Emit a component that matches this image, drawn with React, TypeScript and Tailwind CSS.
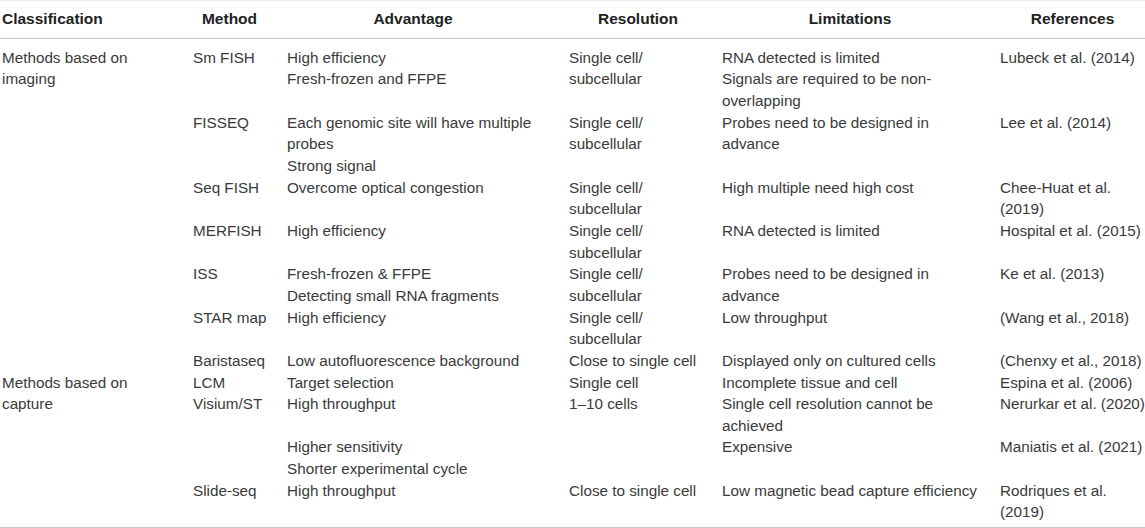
import React from "react";

type Row = {
  cls?: string[];
  span?: number;
  method: string[];
  adv: string[];
  res: string[];
  lim: string[];
  ref: string[];
};

const rows: Row[] = [
  {
    cls: ["Methods based on", "imaging"],
    span: 7,
    method: ["Sm FISH"],
    adv: ["High efficiency", "Fresh-frozen and FFPE"],
    res: ["Single cell/", "subcellular"],
    lim: ["RNA detected is limited", "Signals are required to be non-", "overlapping"],
    ref: ["Lubeck et al. (2014)"],
  },
  {
    method: ["FISSEQ"],
    adv: ["Each genomic site will have multiple", "probes", "Strong signal"],
    res: ["Single cell/", "subcellular"],
    lim: ["Probes need to be designed in", "advance"],
    ref: ["Lee et al. (2014)"],
  },
  {
    method: ["Seq FISH"],
    adv: ["Overcome optical congestion"],
    res: ["Single cell/", "subcellular"],
    lim: ["High multiple need high cost"],
    ref: ["Chee-Huat et al.", "(2019)"],
  },
  {
    method: ["MERFISH"],
    adv: ["High efficiency"],
    res: ["Single cell/", "subcellular"],
    lim: ["RNA detected is limited"],
    ref: ["Hospital et al. (2015)"],
  },
  {
    method: ["ISS"],
    adv: ["Fresh-frozen & FFPE", "Detecting small RNA fragments"],
    res: ["Single cell/", "subcellular"],
    lim: ["Probes need to be designed in", "advance"],
    ref: ["Ke et al. (2013)"],
  },
  {
    method: ["STAR map"],
    adv: ["High efficiency"],
    res: ["Single cell/", "subcellular"],
    lim: ["Low throughput"],
    ref: ["(Wang et al., 2018)"],
  },
  {
    method: ["Baristaseq"],
    adv: ["Low autofluorescence background"],
    res: ["Close to single cell"],
    lim: ["Displayed only on cultured cells"],
    ref: ["(Chenxy et al., 2018)"],
  },
  {
    cls: ["Methods based on", "capture"],
    span: 4,
    method: ["LCM"],
    adv: ["Target selection"],
    res: ["Single cell"],
    lim: ["Incomplete tissue and cell"],
    ref: ["Espina et al. (2006)"],
  },
  {
    method: ["Visium/ST"],
    adv: ["High throughput"],
    res: ["1\u201310 cells"],
    lim: ["Single cell resolution cannot be", "achieved"],
    ref: ["Nerurkar et al. (2020)"],
  },
  {
    method: [],
    adv: ["Higher sensitivity", "Shorter experimental cycle"],
    res: [],
    lim: ["Expensive"],
    ref: ["Maniatis et al. (2021)"],
  },
  {
    method: ["Slide-seq"],
    adv: ["High throughput"],
    res: ["Close to single cell"],
    lim: ["Low magnetic bead capture efficiency"],
    ref: ["Rodriques et al.", "(2019)"],
  },
];

function Lines({ lines }: { lines: string[] }) {
  return (
    <div className="flex flex-col">
      {lines.map((l, i) => (
        <span key={i} className="whitespace-nowrap">
          {l}
        </span>
      ))}
    </div>
  );
}

export default function App() {
  return (
    <div
      className="w-[1145px] h-[528px] bg-white text-[15.25px] leading-[21.65px] text-[#3a3a3a] overflow-hidden"
      style={{ fontFamily: '"Liberation Sans", Arial, sans-serif' }}
    >
      <div className="border-t border-[#ececec]" />
      <div className="grid grid-cols-[191px_94px_282px_153px_278px_1fr] pl-[2px] pt-[7px] pb-[8px] border-b border-[#c8c8c8] font-bold text-[15.5px] text-[#222]">
        <div>Classification</div>
        <div className="flex justify-center pr-[21px]">Method</div>
        <div className="flex justify-center pr-[30px]">Advantage</div>
        <div className="flex justify-center pr-[15px]">Resolution</div>
        <div className="flex justify-center pr-[22px]">Limitations</div>
        <div className="flex justify-center">References</div>
      </div>
      <div className="grid grid-cols-[191px_94px_282px_153px_278px_1fr] pl-[2px] pt-[8px] pb-[4px] border-b border-[#c8c8c8]">
        {rows.map((r, i) => (
          <React.Fragment key={i}>
            {r.cls && (
              <div className={r.span === 7 ? "row-span-7" : "row-span-4"}>
                <Lines lines={r.cls} />
              </div>
            )}
            <div className="col-start-2">
              <Lines lines={r.method} />
            </div>
            <div>
              <Lines lines={r.adv} />
            </div>
            <div>
              <Lines lines={r.res} />
            </div>
            <div>
              <Lines lines={r.lim} />
            </div>
            <div>
              <Lines lines={r.ref} />
            </div>
          </React.Fragment>
        ))}
      </div>
    </div>
  );
}
